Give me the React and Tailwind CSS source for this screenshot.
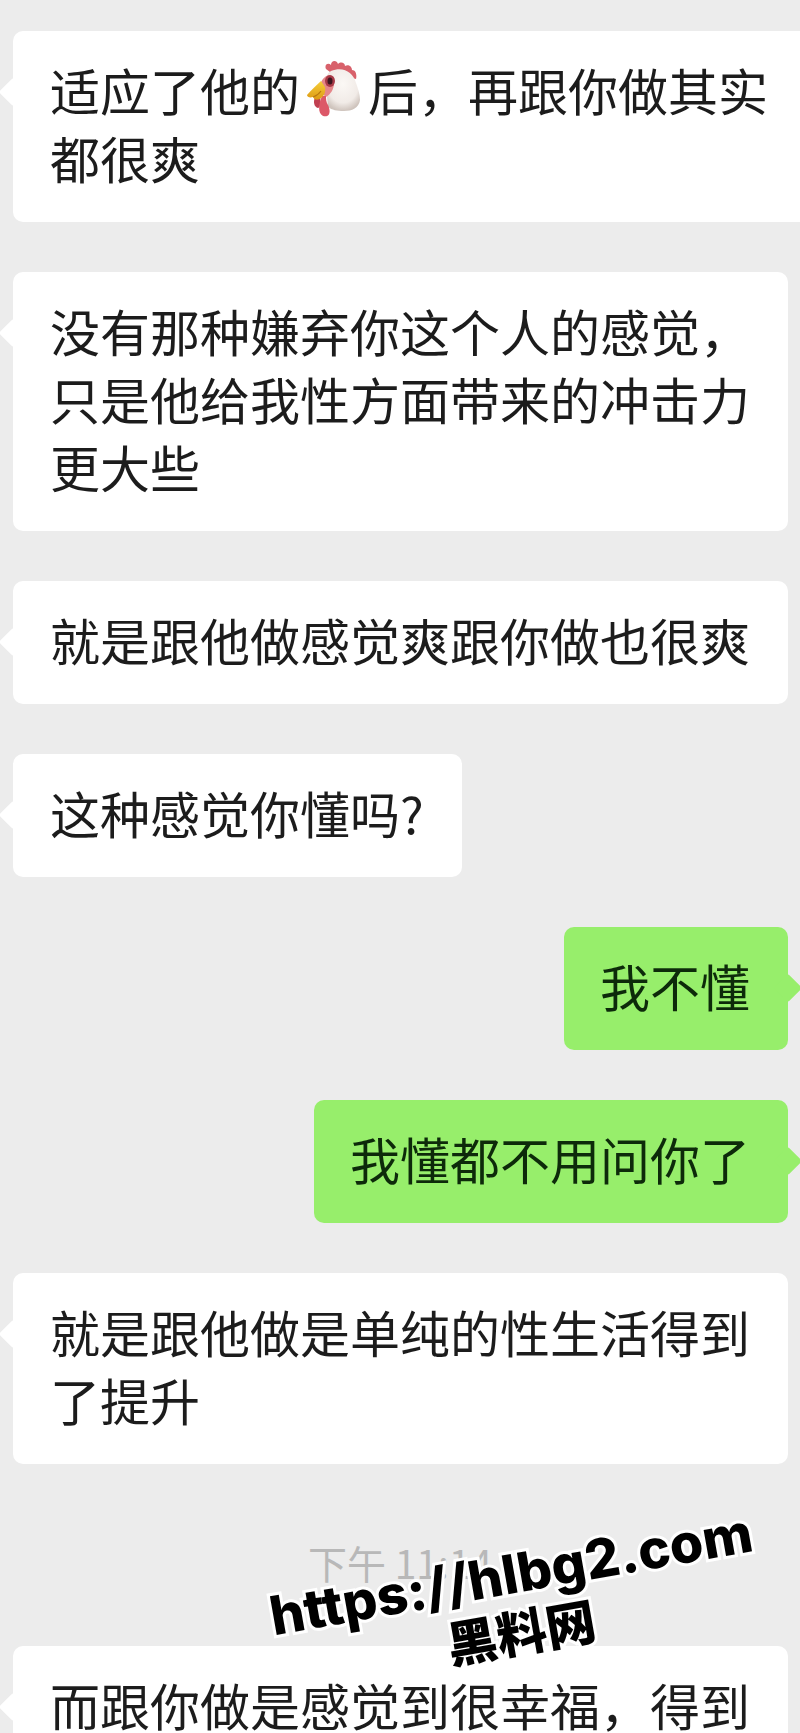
import clsx from "clsx"

const RoosterIcon = () => (
  <svg viewBox="0 0 56 56" role="img" aria-label="🐔" className="inline-block h-14 w-14 mx-1.5 -mt-4">
    <defs>
      <radialGradient id="head" cx="0.5" cy="0.35" r="0.65">
        <stop offset="0" stopColor="#fbf8f5" />
        <stop offset="0.7" stopColor="#f1ebe7" />
        <stop offset="1" stopColor="#cfc4bd" />
      </radialGradient>
      <linearGradient id="beak" x1="0" y1="0" x2="0" y2="1">
        <stop offset="0" stopColor="#f6cf3a" />
        <stop offset="1" stopColor="#dd9a14" />
      </linearGradient>
    </defs>
    <path
      d="M20 8C18 4 22 1 25 4C25 -1 31 -1 32 3C35 0 39 2 39 5C43 3 46 6 46 9C50 9 51 14 50 18L34 14L24 11Z"
      fill="#d8616b"
    />
    <path
      d="M25 10C37 5 47 11 50 22C52 28 54 33 54 39C53 47 46 50 38 50C31 50 26 49 22 46L20 24C20 17 21 12 25 10Z"
      fill="url(#head)"
    />
    <path d="M19 16C23 12 28 15 28 22C28 28 25 33 20 36L14 31C13 25 15 19 19 16Z" fill="#e5868a" />
    <ellipse cx="24" cy="20" rx="5" ry="6" fill="#a93b48" />
    <ellipse cx="24" cy="20" rx="2.5" ry="3.5" fill="#3c1620" />
    <path d="M9 36C7 41 8 46 12 47C15 46 15 41 14 36Z" fill="#c03f50" />
    <path d="M16 35C13 42 11 52 17 55C24 57 25 50 22 44C20 41 20 38 20 35Z" fill="#dc5868" />
    <path d="M15 20C10 25 5 29 1 34C1 36 4 37 7 36C9 40 13 39 15 37C18 35 20 31 19 26Z" fill="url(#beak)" />
    <path d="M7 36C10 35 13 33 15 30" fill="none" stroke="#b9780f" strokeWidth="1.2" />
  </svg>
)

const Watermark = () => (
  <div className="absolute left-[64.5%] top-[88px] z-10 -translate-x-1/2 -translate-y-1/2 -rotate-10 text-center whitespace-nowrap text-black [paint-order:stroke] [-webkit-text-stroke:6px_white]">
    <p className="font-['Inter',sans-serif] font-extrabold text-[54px] leading-14">
      https://hlbg2.com
    </p>
    <p className="font-['Noto_Sans_CJK_SC',sans-serif] font-black text-[50px] leading-14">
      黑料网
    </p>
  </div>
)

const Message = ({ mine, bleed, children }) => (
  <li className={clsx("flex pl-[13px]", mine && "justify-end", !bleed && "pr-3")}>
    <div
      className={clsx(
        "relative pt-6 pb-[31px] text-[50px] leading-[68px]",
        mine ? "bg-[#97ee6b] pl-9 text-[#0d2a0a]" : "bg-white pl-[37px] text-[#1c1c1c]",
        bleed ? "grow rounded-l-[10px] pr-[30px]" : "rounded-[10px] pr-[38px]"
      )}
    >
      <span
        className={clsx(
          "absolute top-[51px] h-5 w-5 rotate-45 rounded-xs",
          mine ? "-right-2.5 bg-[#97ee6b]" : "-left-2.5 bg-white"
        )}
      />
      <p>{children}</p>
    </div>
  </li>
)

const Timestamp = ({ children }) => (
  <li className="relative pt-5 pb-1.5 text-center">
    <time className="block text-[39px] leading-14 text-[#b8b8b8]">{children}</time>
    <Watermark />
  </li>
)

const App = () => {
  return (
    <main
      lang="zh-CN"
      className="h-screen overflow-hidden bg-[#ececec] font-['Noto_Sans_CJK_SC',sans-serif]"
    >
      <ul className="flex flex-col gap-[50px] pt-[31px]">
        <Message bleed>
          适应了他的
          <RoosterIcon />
          后，再跟你做其实都很爽
        </Message>
        <Message>没有那种嫌弃你这个人的感觉，只是他给我性方面带来的冲击力更大些</Message>
        <Message>就是跟他做感觉爽跟你做也很爽</Message>
        <Message>这种感觉你懂吗?</Message>
        <Message mine>我不懂</Message>
        <Message mine>我懂都不用问你了</Message>
        <Message>就是跟他做是单纯的性生活得到了提升</Message>
        <Timestamp>下午 11:14</Timestamp>
        <Message>而跟你做是感觉到很幸福，得到</Message>
      </ul>
    </main>
  )
}

export default App
